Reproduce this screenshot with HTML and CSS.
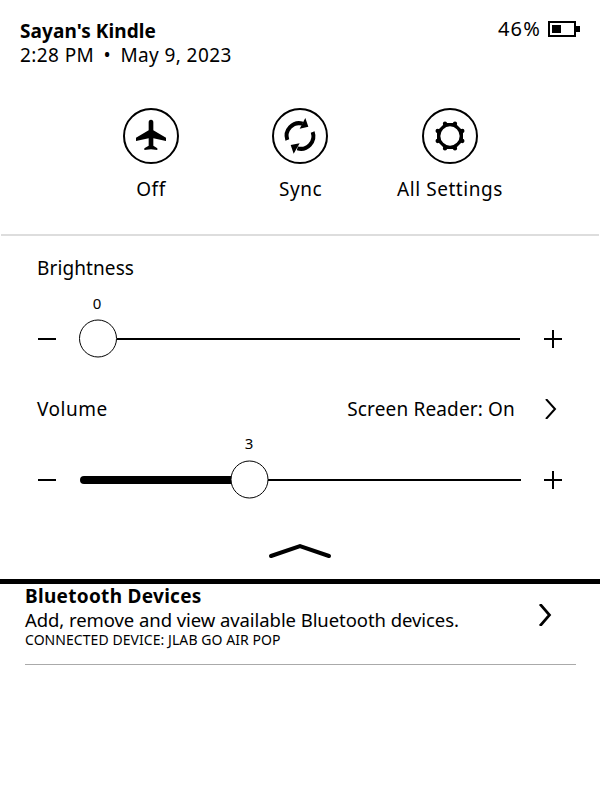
FILE: index.html
```
<!DOCTYPE html>
<html lang="en">
<head>
<meta charset="utf-8">
<title>Quick Settings</title>
<link rel="stylesheet" href="styles.css">
</head>
<body>
<header class="status">
  <div>
    <h1 class="device">Sayan's Kindle</h1>
    <p class="date">2:28 PM <span class="dot">•</span> May 9, 2023</p>
  </div>
  <div class="battery">
    <span class="percent">46%</span>
    <svg width="32" height="16" viewBox="0 0 32 16" shape-rendering="crispEdges"><path fill-rule="evenodd" d="M0 0h28v5h4v6h-4v5H0zM2 2v12h24V2z"/><path d="M4 4h9v8H4z"/></svg>
  </div>
</header>
<nav class="actions">
  <div class="action">
    <svg class="round" viewBox="24 24 168 168"><circle cx="108" cy="108" r="81" fill="none" stroke="#000" stroke-width="6"/><path d="M101 67Q101 59 108 59Q115 59 115 67V91L153 113V123L115 115V137L127 145V150L108 148L88 150V145L101 137V115L63 123V113L101 91Z"/></svg>
    <span class="label">Off</span>
  </div>
  <div class="action">
    <svg class="round" viewBox="30 24 168 168"><circle cx="114" cy="108" r="81" fill="none" stroke="#000" stroke-width="6"/><path d="M76 120A38 38 0 0 1 122 71M152 96A38 38 0 0 1 106 145" fill="none" stroke="#000" stroke-width="12"/><path d="M130 54L139 80L113 86ZM95 161L86 135L113 130Z"/></svg>
    <span class="label">Sync</span>
  </div>
  <div class="action">
    <svg class="round" viewBox="96 24 168 168"><circle cx="180" cy="108" r="81" fill="none" stroke="#000" stroke-width="6"/><path fill-rule="evenodd" d="M165 69H195L219 93V123L195 147H165L141 123V93ZM180 79A29 29 0 1 0 180 137A29 29 0 1 0 180 79Z"/><path d="M165 71h0M195 71h0M217 93h0M217 123h0M195 145h0M165 145h0M143 123h0M143 93h0" stroke="#000" stroke-width="13" stroke-linecap="round"/></svg>
    <span class="label">All Settings</span>
  </div>
</nav>
<main class="controls">
  <section class="control">
    <div class="heading"><h2 class="brightness">Brightness</h2></div>
    <div class="value brightness-value">0</div>
    <svg class="slider" viewBox="0 0 526 40"><path d="M0 20h18M79 20h403M506 20h18M515 11v18" stroke="#000" stroke-width="2"/><circle cx="60" cy="19.5" r="18.5" fill="#fff" stroke="#000"/></svg>
  </section>
  <section class="control">
    <div class="heading"><h2 class="volume">Volume</h2><span class="reader">Screen Reader: On</span><svg class="chevron" width="12" height="20" viewBox="0 0 12 20"><path d="M1 0L10 10L1 20" fill="none" stroke="#000" stroke-width="2"/></svg></div>
    <div class="value volume-value">3</div>
    <svg class="slider" viewBox="0 0 526 40"><path d="M0 20h18M230 20h253M506 20h18M515 11v18" stroke="#000" stroke-width="2"/><path d="M46 20h150" stroke="#000" stroke-width="8" stroke-linecap="round"/><circle cx="211.500" cy="19.5" r="18.5" fill="#fff" stroke="#000"/></svg>
  </section>
  <svg class="collapse" width="64" height="16" viewBox="0 0 64 16"><path d="M3 13L32 3L61 13" fill="none" stroke="#000" stroke-width="4" stroke-linecap="round"/></svg>
</main>
<section class="bluetooth">
  <div class="details">
    <h2 class="bt-title">Bluetooth Devices</h2>
    <p class="bt-text">Add, remove and view available Bluetooth devices.</p>
    <p class="bt-state">CONNECTED DEVICE: JLAB GO AIR POP</p>
  </div>
  <svg class="bt-chevron" width="14" height="22" viewBox="0 0 14 22"><path d="M2 0L11.500 11L2 22" fill="none" stroke="#000" stroke-width="2.700"/></svg>
</section>
</body>
</html>
```
FILE: styles.css
```
* { box-sizing: border-box; }
body { margin: 0; background: #fff; color: #000; font: 19px/25px "Noto Sans", sans-serif; white-space: nowrap; }
h1, h2, p { margin: 0; font-size: inherit; font-weight: 400; }
svg { display: block; flex: none; }
.status { display: flex; justify-content: space-between; height: 108px; padding: 18px 20px 0; }
.device { padding-top: 1px; font-weight: 700; line-height: 24px; letter-spacing: .08px; }
.date { letter-spacing: .4px; }
.dot { margin: 0 4px; }
.battery { display: flex; height: 22px; align-items: center; gap: 7px; }
.percent { font-size: 20px; line-height: 22px; letter-spacing: 1.2px; margin-top: -1px; }
.actions { display: grid; grid-template-columns: repeat(3, 149.5px); justify-content: center; height: 128px; border-bottom: 2px solid #ddd; margin: 0 1px; }
.action { display: flex; flex-direction: column; align-items: center; }
.round { width: 56px; height: 56px; }
.label { margin-top: 13px; padding-left: 1px; letter-spacing: .55px; }
.controls { height: 348px; padding: 19px 37px 0 38px; border-bottom: 5px solid #000; }
.control { height: 141px; }
.heading { display: flex; align-items: center; height: 26px; margin-left: -1px; }
.brightness { letter-spacing: .1px; }
.volume { letter-spacing: .5px; }
.reader { margin-left: auto; margin-right: 30px; letter-spacing: .15px; }
.chevron { margin-right: 6px; }
.value { width: 40px; height: 20px; margin-top: 12px; text-align: center; font-size: 15px; line-height: 20px; }
.brightness-value { margin-left: 39px; }
.volume-value { margin-left: 191px; line-height: 18px; }
.slider { width: 526px; height: 40px; margin-top: 6px; }
.collapse { margin: 6px 0 0 230px; }
.bluetooth { display: flex; justify-content: space-between; height: 81px; margin: 0 24px 0 25px; border-bottom: 1px solid #aaa; }
.bt-title { font-weight: 700; line-height: 24px; letter-spacing: .3px; }
.bt-text { padding-bottom: 2px; font-size: 18.5px; line-height: 23px; letter-spacing: -.07px; }
.bt-state { font-size: 14px; line-height: 14px; letter-spacing: .06px; }
.bt-chevron { margin: 20px 24px 0 0; }
```
